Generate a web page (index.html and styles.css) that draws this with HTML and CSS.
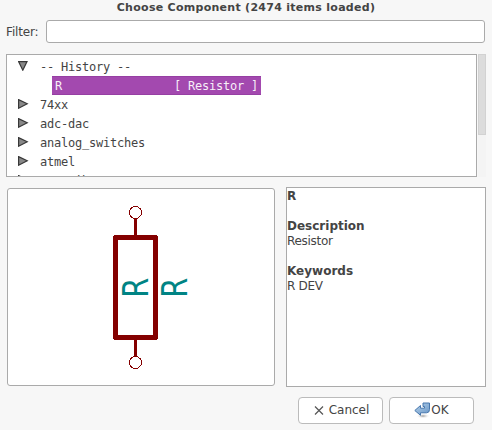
FILE: index.html
```html
<!DOCTYPE html>
<html lang="en">
<head>
<meta charset="utf-8">
<title>Choose Component</title>
<link rel="stylesheet" href="styles.css">
</head>
<body>
<div class="dialog">
  <h1 class="title">Choose Component (2474 items loaded)</h1>
  <div class="filter">
    <label class="filter-label" for="filter">Filter:</label>
    <input class="filter-input" id="filter" type="text">
  </div>
  <div class="browser">
    <ul class="tree">
      <li class="row"><svg class="arrow" viewBox="0 0 11 10"><path d="M.6 .6H9L4.800 9.200Z"/></svg><span>-- History --</span></li>
      <li class="row"><span class="selected"><span>R</span><span>[ Resistor ]</span></span></li>
      <li class="row"><svg class="arrow" viewBox="0 0 11 10"><path d="M.6 .6V9.200L9.200 4.800Z"/></svg><span>74xx</span></li>
      <li class="row"><svg class="arrow" viewBox="0 0 11 10"><path d="M.6 .6V9.200L9.200 4.800Z"/></svg><span>adc-dac</span></li>
      <li class="row"><svg class="arrow" viewBox="0 0 11 10"><path d="M.6 .6V9.200L9.200 4.800Z"/></svg><span>analog_switches</span></li>
      <li class="row"><svg class="arrow" viewBox="0 0 11 10"><path d="M.6 .6V9.200L9.200 4.800Z"/></svg><span>atmel</span></li>
      <li class="row"><svg class="arrow" viewBox="0 0 11 10"><path d="M.6 .6V9.200L9.200 4.800Z"/></svg><span>contrib</span></li>
    </ul>
    <div class="scrollbar"><div class="thumb"></div></div>
  </div>
  <div class="details">
    <div class="preview">
      <svg class="symbol" width="266" height="196" viewBox="8 189 266 196">
        <g class="pins" shape-rendering="crispEdges">
          <path d="M135.500 218V236M135.500 339V357"/>
          <rect x="115.500" y="237.500" width="40" height="100"/>
        </g>
        <circle class="pin-end" cx="135.500" cy="212.500" r="6" shape-rendering="crispEdges"/>
        <circle class="pin-end" cx="135.500" cy="362.500" r="6" shape-rendering="crispEdges"/>
        <text class="ref" transform="translate(147.800 297.700) rotate(-90) scale(.8 1)">R</text>
        <text class="ref" transform="translate(187.300 297.700) rotate(-90) scale(.8 1)">R</text>
      </svg>
    </div>
    <div class="info">
      <p class="strong">R</p>
      <p class="strong gap">Description</p>
      <p>Resistor</p>
      <p class="strong gap">Keywords</p>
      <p>R DEV</p>
    </div>
  </div>
  <div class="actions">
    <button class="button cancel"><svg class="cross" width="10" height="10" viewBox="0 0 10 10"><path d="M1 .5L9 8.500M9 .5L1 8.500"/></svg><span>Cancel</span></button>
    <button class="button ok"><svg width="17" height="17" viewBox="0 0 17 17">
      <defs>
        <linearGradient id="blue" x2="1" y2="1"><stop offset="0" stop-color="#b9d3ea"/><stop offset="1" stop-color="#6594c6"/></linearGradient>
        <radialGradient id="shade"><stop offset="0" stop-color="#999"/><stop offset="1" stop-color="#fff" stop-opacity="0"/></radialGradient>
      </defs>
      <ellipse cx="9" cy="14" rx="7" ry="2.500" fill="url(#shade)"/>
      <path d="M.8 8.500L6.500 3.500V6.200H10.500V4.500H9V1H15.500V7.500Q15.500 10.800 12.500 10.800H6.500V13.300Z" fill="url(#blue)" stroke="#4777ad"/>
    </svg><span>OK</span></button>
  </div>
</div>
</body>
</html>
```
FILE: styles.css
```css
* { box-sizing: border-box; }

body {
  margin: 0;
  background: #f7f7f7;
  color: #444;
  font: 12px/15px "DejaVu Sans", sans-serif;
}

.dialog {
  width: 492px;
  height: 430px;
  overflow: hidden;
}

.title {
  height: 20px;
  margin: 0;
  padding-top: 1px;
  font-size: 11px;
  line-height: 14px;
  text-align: center;
  letter-spacing: .28px;
}

.filter {
  display: flex;
  align-items: center;
  gap: 8px;
  height: 23px;
  padding: 0 7px 0 6px;
}

.filter-label {
  width: 32px;
  padding-top: 2px;
  white-space: nowrap;
  letter-spacing: -.15px;
}

.filter-input {
  flex: 1;
  height: 23px;
  border: 1px solid #aaa;
  border-radius: 3px;
  background: #fff;
}

.browser {
  display: flex;
  gap: 1px;
  height: 123px;
  margin: 11px 6px 0;
}

.tree {
  width: 471px;
  margin: 0;
  padding: 3px 0 0 11px;
  overflow: hidden;
  border: 1px solid #aaa;
  background: #fff;
  list-style: none;
  font: 12px/19px "DejaVu Sans Mono", monospace;
  letter-spacing: -.22px;
}

.row {
  display: flex;
  height: 19px;
  white-space: pre;
}

.arrow {
  width: 11px;
  height: 10px;
  margin: 3px 11px 0 0;
  fill: #888;
  stroke: #383838;
  stroke-width: 1.2;
}

.selected {
  display: flex;
  justify-content: space-between;
  width: 209px;
  height: 19px;
  margin: -1px 0 0 34px;
  padding: 0 3px;
  border: solid #963fa3;
  border-width: 1px 0;
  background: #a349af;
  color: #f7eff8;
  line-height: 18px;
}

.scrollbar {
  width: 8px;
  background: #f4f4f4;
}

.thumb {
  height: 81px;
  border: 1px solid #d2d2d2;
  background: #dcdcdc;
}

.details {
  display: flex;
  gap: 11px;
  align-items: center;
  height: 200px;
  margin: 10px 6px 0 7px;
}

.preview {
  width: 268px;
  height: 198px;
  border: 1px solid #aaa;
  border-radius: 3px;
  background: #fff;
}

.symbol { display: block; }

.pins {
  fill: none;
  stroke: #840000;
}

.pins path { stroke-width: 3; }
.pins rect { stroke-width: 5; stroke-linejoin: round; }

.pin-end {
  fill: #fff;
  stroke: #840000;
}

.ref {
  fill: #008484;
  font: 36px "DejaVu Sans", sans-serif;
}

.info {
  width: 200px;
  height: 200px;
  padding: 1px 0 0;
  border: 1px solid #aaa;
  background: #fff;
  letter-spacing: -.3px;
}

.info p { margin: 0; }
.info .strong { font-weight: bold; letter-spacing: 0; }
.info .gap { margin-top: 15px; }

.actions {
  display: flex;
  justify-content: flex-end;
  gap: 6px;
  margin: 10px 18px 0 0;
}

.button {
  display: flex;
  align-items: center;
  justify-content: center;
  width: 85px;
  height: 27px;
  padding: 0;
  border: 1px solid #bbb;
  border-radius: 4px;
  background: #fff;
  color: #444;
  font: 12px/15px "DejaVu Sans", sans-serif;
}

.cancel { gap: 5px; padding-left: 2px; }

.cross {
  fill: none;
  stroke: #555;
  stroke-width: 1.2;
}
```
